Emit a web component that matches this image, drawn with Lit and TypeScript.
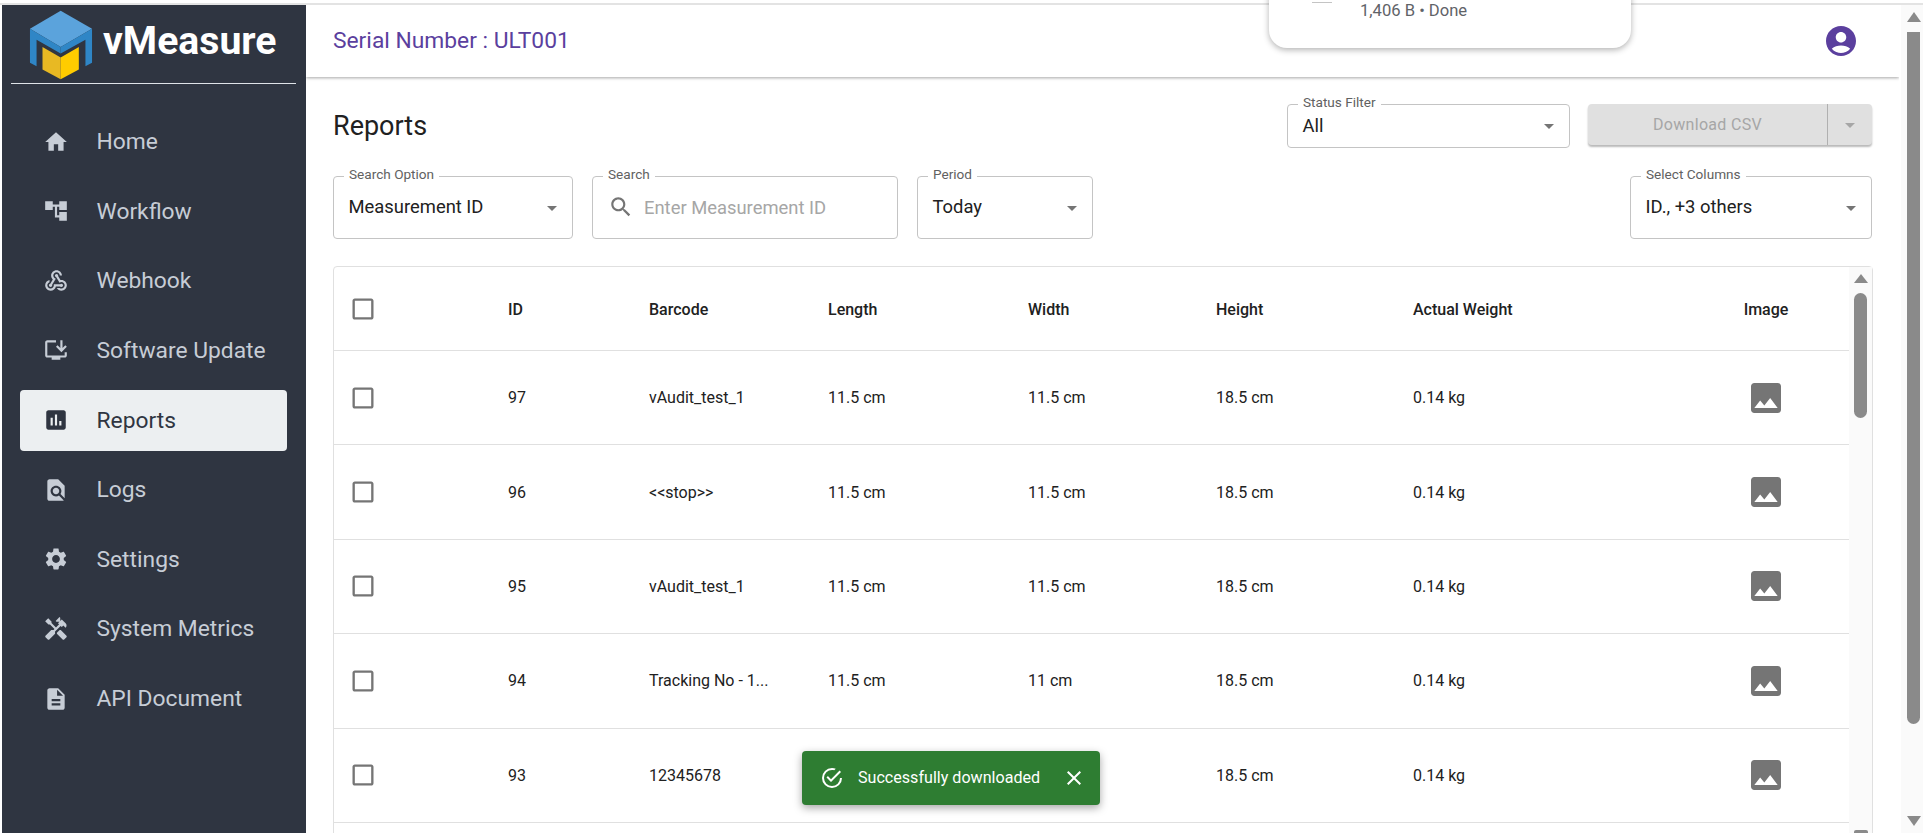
import { css, html, LitElement, svg } from "lit";
import { customElement } from "lit/decorators.js";
import { repeat } from "lit/directives/repeat.js";

const ICONS: Record<string, string> = {
  home: "M10 20v-6h4v6h5v-8h3L12 3 2 12h3v8z",
  tree: "M22 11V3h-7v3H9V3H2v8h7V8h2v10h4v3h7v-8h-7v3h-2V8h2v3z",
  webhook: "M10 15h5.88c.27-.31.67-.5 1.12-.5.83 0 1.5.67 1.5 1.5s-.67 1.5-1.5 1.5c-.44 0-.84-.19-1.12-.5H11.9c-.46 2.28-2.48 4-4.9 4-2.76 0-5-2.24-5-5 0-2.42 1.72-4.44 4-4.9v2.07c-1.16.41-2 1.53-2 2.83 0 1.65 1.35 3 3 3s3-1.35 3-3v-1zm2.5-11c1.65 0 3 1.35 3 3h2c0-2.76-2.24-5-5-5s-5 2.24-5 5c0 1.43.6 2.71 1.55 3.62l-2.35 3.9c-.68.14-1.2.75-1.2 1.48 0 .83.67 1.5 1.5 1.5s1.5-.67 1.5-1.5c0-.16-.02-.31-.07-.45l3.38-5.63C10.49 9.61 9.5 8.42 9.5 7c0-1.65 1.35-3 3-3zm4.5 9c-.64 0-1.23.2-1.72.54l-3.05-5.07C11.53 8.35 11 7.74 11 7c0-.83.67-1.5 1.5-1.5S14 6.17 14 7c0 .15-.02.29-.06.43l2.19 3.65c.28-.05.57-.08.87-.08 2.76 0 5 2.24 5 5s-2.24 5-5 5c-1.85 0-3.47-1.01-4.33-2.5h2.67c.48.32 1.05.5 1.66.5 1.65 0 3-1.35 3-3s-1.35-3-3-3z",
  install: "M20 17H4V5h8V3H4c-1.11 0-2 .89-2 2v12c0 1.1.89 2 2 2h4v2h8v-2h4c1.1 0 2-.9 2-2v-3h-2v3zM17 14l5-5-1.41-1.41L18 10.17V3h-2v7.17l-2.59-2.58L12 9z",
  assessment: "M19 3H5c-1.1 0-2 .9-2 2v14c0 1.1.9 2 2 2h14c1.1 0 2-.9 2-2V5c0-1.1-.9-2-2-2zM9 17H7v-7h2v7zm4 0h-2V7h2v10zm4 0h-2v-4h2v4z",
  find: "M20 19.59V8l-6-6H6c-1.1 0-1.99.9-1.99 2L4 20c0 1.1.89 2 1.99 2H18c.45 0 .85-.15 1.19-.4l-4.43-4.43c-.8.52-1.74.83-2.76.83-2.76 0-5-2.24-5-5s2.24-5 5-5 5 2.24 5 5c0 1.02-.31 1.96-.83 2.75L20 19.59zM9 13c0 1.66 1.34 3 3 3s3-1.34 3-3-1.34-3-3-3-3 1.34-3 3z",
  settings: "M19.14 12.94c.04-.3.06-.61.06-.94 0-.32-.02-.64-.07-.94l2.03-1.58c.18-.14.23-.41.12-.61l-1.92-3.32c-.12-.22-.37-.29-.59-.22l-2.39.96c-.5-.38-1.03-.7-1.62-.94l-.36-2.54c-.04-.24-.24-.41-.48-.41h-3.84c-.24 0-.43.17-.47.41l-.36 2.54c-.59.24-1.13.57-1.62.94l-2.39-.96c-.22-.08-.47 0-.59.22L2.74 8.87c-.12.21-.08.47.12.61l2.03 1.58c-.05.3-.09.63-.09.94s.02.64.07.94l-2.03 1.58c-.18.14-.23.41-.12.61l1.92 3.32c.12.22.37.29.59.22l2.39-.96c.5.38 1.03.7 1.62.94l.36 2.54c.05.24.24.41.48.41h3.84c.24 0 .44-.17.47-.41l.36-2.54c.59-.24 1.13-.56 1.62-.94l2.39.96c.22.08.47 0 .59-.22l1.92-3.32c.12-.22.07-.47-.12-.61l-2.01-1.58zM12 15.6c-1.98 0-3.6-1.62-3.6-3.6s1.62-3.6 3.6-3.6 3.6 1.62 3.6 3.6-1.62 3.6-3.6 3.6z",
  handyman: "M21.67 18.17l-5.3-5.3h-.99l-2.54 2.54v.99l5.3 5.3c.39.39 1.02.39 1.41 0l2.12-2.12c.39-.38.39-1.02 0-1.41zM17.34 10.19l1.41-1.41 2.12 2.12c1.17-1.17 1.17-3.07 0-4.24l-3.54-3.54-1.41 1.41V1.71l-.7-.71-3.54 3.54.71.71h2.83l-1.41 1.41 1.06 1.06-2.89 2.89-4.13-4.13V5.06L4.83 2.04 2 4.87 5.03 7.9h1.41l4.13 4.13-.85.85H7.6l-5.3 5.3c-.39.39-.39 1.02 0 1.41l2.12 2.12c.39.39 1.02.39 1.41 0l5.3-5.3v-2.12l5.15-5.15 1.06 1.05z",
  description: "M14 2H6c-1.1 0-1.99.9-1.99 2L4 20c0 1.1.89 2 1.99 2H18c1.1 0 2-.9 2-2V8l-6-6zm2 16H8v-2h8v2zm0-4H8v-2h8v2zm-3-5V3.5L18.5 9H13z",
  account: "M12 2C6.48 2 2 6.48 2 12s4.48 10 10 10 10-4.48 10-10S17.52 2 12 2zm0 4c1.93 0 3.5 1.57 3.5 3.5S13.93 13 12 13s-3.5-1.57-3.5-3.5S10.07 6 12 6zm0 14c-2.03 0-4.43-.82-6.14-2.88C7.55 15.8 9.68 15 12 15s4.45.8 6.14 2.12C16.43 19.18 14.03 20 12 20z",
  search: "M15.5 14h-.79l-.28-.27C15.41 12.59 16 11.11 16 9.5 16 5.91 13.09 3 9.5 3S3 5.91 3 9.5 5.91 16 9.5 16c1.61 0 3.09-.59 4.23-1.57l.27.28v.79l5 4.99L20.49 19l-4.99-5zm-6 0C7.01 14 5 11.99 5 9.5S7.01 5 9.5 5 14 7.01 14 9.5 11.99 14 9.5 14z",
  image: "M21 19V5c0-1.1-.9-2-2-2H5c-1.1 0-2 .9-2 2v14c0 1.1.9 2 2 2h14c1.1 0 2-.9 2-2zM8.5 13.5l2.5 3.01L14.5 12l4.5 6H5l3.5-4.5z",
  checkbox: "M19 5v14H5V5h14m0-2H5c-1.1 0-2 .9-2 2v14c0 1.1.9 2 2 2h14c1.1 0 2-.9 2-2V5c0-1.1-.9-2-2-2z",
  success: "M20 12a8 8 0 0 1-8 8 8 8 0 0 1-8-8 8 8 0 0 1 8-8c.76 0 1.5.11 2.2.31l1.57-1.57A9.822 9.822 0 0 0 12 2 10 10 0 0 0 2 12a10 10 0 0 0 10 10 10 10 0 0 0 10-10M7.91 10.08 6.5 11.5 11 16 21 6l-1.41-1.42L11 13.17l-3.09-3.09Z",
  close: "M19 6.41L17.59 5 12 10.59 6.41 5 5 6.41 10.59 12 5 17.59 6.41 19 12 13.41 17.59 19 19 17.59 13.41 12z",
  caret: "M7 10l5 5 5-5z",
};

const icon = (name: string, size: number) => html`
  <svg class="icon" width=${size} height=${size} viewBox="0 0 24 24" fill="currentColor">
    ${svg`<path d=${ICONS[name]}></path>`}
  </svg>
`;

const NAV = [
  { label: "Home", icon: "home" },
  { label: "Workflow", icon: "tree" },
  { label: "Webhook", icon: "webhook" },
  { label: "Software Update", icon: "install" },
  { label: "Reports", icon: "assessment", active: true },
  { label: "Logs", icon: "find" },
  { label: "Settings", icon: "settings" },
  { label: "System Metrics", icon: "handyman" },
  { label: "API Document", icon: "description" },
];

// row 93 has its length and width under the toast, so they stay blank
const ROWS = [
  { id: "97", barcode: "vAudit_test_1", length: "11.5 cm", width: "11.5 cm" },
  { id: "96", barcode: "<<stop>>", length: "11.5 cm", width: "11.5 cm" },
  { id: "95", barcode: "vAudit_test_1", length: "11.5 cm", width: "11.5 cm" },
  { id: "94", barcode: "Tracking No - 1...", length: "11.5 cm", width: "11 cm" },
  { id: "93", barcode: "12345678", length: "", width: "" },
];

@customElement("app-root")
export default class AppRoot extends LitElement {
  static styles = css`
    :host {
      display: flex;
      flex-direction: column;
      position: relative;
      height: 833px;
      overflow: hidden;
      background: #fff;
      font-family: Roboto, sans-serif;
      color: #212121;
    }

    * {
      box-sizing: border-box;
    }

    .icon {
      display: block;
      flex: none;
    }

    .top-line {
      flex: none;
      height: 5px;
      border-top: 3px solid #fff;
      background: #e3e3e3;
    }

    .shell {
      flex: 1;
      min-height: 0;
      display: flex;
      padding-left: 2px;
    }

    /* sidebar */
    .sidebar {
      flex: none;
      width: 304px;
      background: #2f3541;
      display: flex;
      flex-direction: column;
    }

    .brand {
      height: 75px;
      margin: 4px 10px 0 9px;
      padding-left: 18px;
      border-bottom: 1px solid #dfe3e8;
      display: flex;
      align-items: flex-start;
      gap: 10px;
    }

    .brand svg {
      margin-top: 1px;
    }

    .brand span {
      color: #fff;
      font-size: 39.2px;
      font-weight: 700;
      line-height: 58px;
      margin-top: 3px;
    }

    .nav {
      list-style: none;
      margin: 27px 0 0;
      padding: 0 19px 0 18px;
    }

    .nav li {
      height: 61px;
      margin-bottom: 8.65px;
      padding-left: 23px;
      display: flex;
      align-items: center;
      gap: 27.5px;
      border-radius: 4px;
      color: #c7cdd6;
      font-size: 22.8px;
    }

    .nav li.active {
      background: #eceff1;
      color: #2f3541;
    }

    /* main column */
    .main {
      flex: 1;
      min-width: 0;
      display: flex;
      flex-direction: column;
      overflow: hidden;
    }

    .header {
      flex: none;
      height: 72px;
      padding: 0 40px 0 27px;
      display: flex;
      align-items: center;
      justify-content: space-between;
      box-shadow: 0 1px 3px rgba(0, 0, 0, 0.35);
      color: #5b3f9e;
      font-size: 22.8px;
    }

    .header > span {
      margin-top: -1px;
    }

    .content {
      flex: 1;
      min-height: 0;
      padding: 27px 26px 0 27px;
      display: flex;
      flex-direction: column;
    }

    .title-row {
      flex: none;
      display: flex;
      align-items: flex-start;
      gap: 18px;
      height: 44px;
      margin-right: 1px;
    }

    .title-row h1 {
      margin: 0 auto 0 0;
      font-size: 27px;
      font-weight: 400;
      line-height: 44px;
    }

    .filter-row {
      flex: none;
      display: flex;
      gap: 19px;
      margin: 28px 1px 0 0;
      height: 63px;
    }

    .field {
      position: relative;
      height: 100%;
      border: 1px solid #c4c4c4;
      border-radius: 4px;
      padding: 0 8px 0 14.5px;
      display: flex;
      align-items: flex-start;
      justify-content: space-between;
      font-size: 18.4px;
      line-height: 28px;
    }

    .field .value {
      padding-top: 16px;
    }

    .field .caret {
      margin-top: 19px;
      color: #757575;
    }

    .field label {
      position: absolute;
      left: 10px;
      top: -11px;
      padding: 0 5px;
      background: #fff;
      color: #616161;
      font-size: 13.6px;
      line-height: 16px;
    }

    .status {
      width: 283px;
    }

    .status .value {
      padding-top: 7px;
    }

    .status .caret {
      margin-top: 9px;
    }

    .search-field {
      justify-content: flex-start;
      gap: 10px;
      padding-left: 15px;
      color: #a6a6a6;
    }

    .search-field .value {
      padding-top: 17px;
    }

    .search-field .mag {
      margin-top: 17px;
      color: #757575;
    }

    .split {
      width: 284px;
      height: 41px;
      display: flex;
      align-items: center;
      background: #e0e0e0;
      border-radius: 4px;
      box-shadow: 0 2px 2px rgba(0, 0, 0, 0.28);
      color: #a6a6a6;
      font-size: 16px;
    }

    .split .text {
      flex: 1;
      text-align: center;
      letter-spacing: 0.3px;
    }

    .split .more {
      flex: none;
      width: 45px;
      height: 100%;
      border-left: 1px solid #b0b0b0;
      display: flex;
      align-items: center;
      justify-content: center;
    }

    /* table */
    .table {
      flex: none;
      display: flex;
      height: 640px;
      margin-top: 27px;
      border: 1px solid #e0e0e0;
      border-radius: 4px;
    }

    .rows {
      flex: 1;
      min-width: 0;
    }

    .row {
      display: grid;
      grid-template-columns: 174px 141px 179px 200px 188px 197px 270px 166px;
      align-items: center;
      height: 94.4px;
      border-bottom: 1px solid #e0e0e0;
      font-size: 16px;
    }

    .row.head {
      height: 84px;
      font-weight: 500;
    }

    .row.head span:not(.check) {
      margin-top: 2px;
    }

    .row .check {
      padding-left: 15px;
      color: #757575;
    }

    .row .pic {
      display: flex;
      justify-content: center;
      color: #757575;
    }

    .row .center {
      text-align: center;
    }

    .vbar {
      flex: none;
      width: 23px;
      background: #fafafa;
      display: flex;
      flex-direction: column;
      align-items: center;
    }

    .vbar .up {
      width: 0;
      height: 0;
      margin-top: 7px;
      border-left: 7px solid transparent;
      border-right: 7px solid transparent;
      border-bottom: 9px solid #8a8a8a;
    }

    .vbar .thumb {
      width: 13px;
      height: 125px;
      margin-top: 10px;
      border-radius: 7px;
      background: #8a8a8a;
    }

    .vbar .foot {
      width: 14px;
      height: 4px;
      margin-top: 412px;
      border-radius: 2px 2px 0 0;
      background: #8a8a8a;
    }

    .page-bar {
      flex: none;
      width: 22px;
      margin-left: 2px;
      background: #fafafa;
      display: flex;
      flex-direction: column;
      align-items: center;
      padding-left: 3px;
    }

    .page-bar .up,
    .page-bar .down {
      width: 0;
      height: 0;
      border-left: 7px solid transparent;
      border-right: 7px solid transparent;
    }

    .page-bar .up {
      margin-top: 7px;
      border-bottom: 10px solid #8a8a8a;
    }

    .page-bar .thumb {
      width: 13px;
      height: 692px;
      margin-top: 10px;
      border-radius: 0 0 7px 7px;
      background: #8a8a8a;
    }

    .page-bar .down {
      margin-top: 92px;
      border-top: 10px solid #8a8a8a;
    }

    /* things lying over the page */
    .download-bubble {
      position: absolute;
      left: 1269px;
      top: -10px;
      width: 362px;
      height: 58px;
      padding: 12px 0 0 91px;
      background: #fff;
      border-radius: 0 0 18px 18px;
      box-shadow: 0 2px 6px rgba(0, 0, 0, 0.3);
      color: #5f6368;
      font-size: 16.6px;
      line-height: 18px;
    }

    .download-bubble i {
      position: absolute;
      left: 43px;
      top: 12px;
      width: 20px;
      height: 1px;
      background: #c4c4c4;
    }

    .toast {
      position: absolute;
      left: 802px;
      top: 751px;
      width: 298px;
      height: 54px;
      padding: 0 14px 0 18px;
      display: flex;
      align-items: center;
      border-radius: 4px;
      background: #2e7d32;
      color: #fff;
      font-size: 16.1px;
      box-shadow: 0 3px 8px rgba(0, 0, 0, 0.35);
    }

    .toast .msg {
      flex: 1;
      margin-left: 14px;
      margin-top: -2px;
    }
  `;

  private renderField(label: string, value: string, extra = "", width = 0) {
    const style = width ? `width:${width}px` : "";
    return html`
      <div class="field ${extra}" style=${style}>
        <label>${label}</label>
        <span class="value">${value}</span>
        <span class="caret">${icon("caret", 24)}</span>
      </div>
    `;
  }

  render() {
    return html`
      <div class="top-line"></div>
      <div class="shell">
        <aside class="sidebar">
          <div class="brand">
            <svg width="64" height="70" viewBox="88 28 192 212">
              <polygon points="183,30 278,85 183,140 90,85" fill="#5ba3dc"></polygon>
              <polygon points="90,85 183,140 183,160 110,118 110,198 90,188" fill="#2f86c6"></polygon>
              <polygon points="278,85 183,140 183,160 258,118 258,198 278,188" fill="#2f86c6"></polygon>
              <polygon points="128,140 183,172 183,238 128,208" fill="#e8b923"></polygon>
              <polygon points="238,140 183,172 183,238 238,208" fill="#ffcc00"></polygon>
            </svg>
            <span>vMeasure</span>
          </div>
          <ul class="nav">
            ${repeat(NAV, (item) => item.label, (item) => html`
              <li class=${item.active ? "active" : ""}>${icon(item.icon, 26)}<span>${item.label}</span></li>
            `)}
          </ul>
        </aside>

        <div class="main">
          <header class="header">
            <span>Serial Number : ULT001</span>
            ${icon("account", 36)}
          </header>
          <section class="content">
            <div class="title-row">
              <h1>Reports</h1>
              ${this.renderField("Status Filter", "All", "status")}
              <div class="split">
                <span class="text">Download CSV</span>
                <span class="more">${icon("caret", 24)}</span>
              </div>
            </div>

            <div class="filter-row">
              ${this.renderField("Search Option", "Measurement ID", "", 240)}
              <div class="field search-field" style="width:306px">
                <label>Search</label>
                <span class="mag">${icon("search", 26)}</span>
                <span class="value">Enter Measurement ID</span>
              </div>
              ${this.renderField("Period", "Today", "", 176)}
              <div style="flex:1"></div>
              ${this.renderField("Select Columns", "ID., +3 others", "", 242)}
            </div>

            <div class="table">
              <div class="rows">
                <div class="row head">
                  <span class="check">${icon("checkbox", 28)}</span>
                  <span>ID</span><span>Barcode</span><span>Length</span><span>Width</span>
                  <span>Height</span><span>Actual Weight</span><span class="center">Image</span>
                </div>
                ${repeat(ROWS, (row) => row.id, (row) => html`
                  <div class="row">
                    <span class="check">${icon("checkbox", 28)}</span>
                    <span>${row.id}</span><span>${row.barcode}</span><span>${row.length}</span><span>${row.width}</span>
                    <span>18.5 cm</span><span>0.14 kg</span>
                    <span class="pic">${icon("image", 40)}</span>
                  </div>
                `)}
              </div>
              <div class="vbar">
                <span class="up"></span>
                <span class="thumb"></span>
                <span class="foot"></span>
              </div>
            </div>
          </section>
        </div>

        <div class="page-bar">
          <span class="up"></span>
          <span class="thumb"></span>
          <span class="down"></span>
        </div>
      </div>

      <div class="download-bubble"><i></i>1,406 B • Done</div>

      <div class="toast">
        ${icon("success", 24)}
        <span class="msg">Successfully downloaded</span>
        ${icon("close", 24)}
      </div>
    `;
  }
}
